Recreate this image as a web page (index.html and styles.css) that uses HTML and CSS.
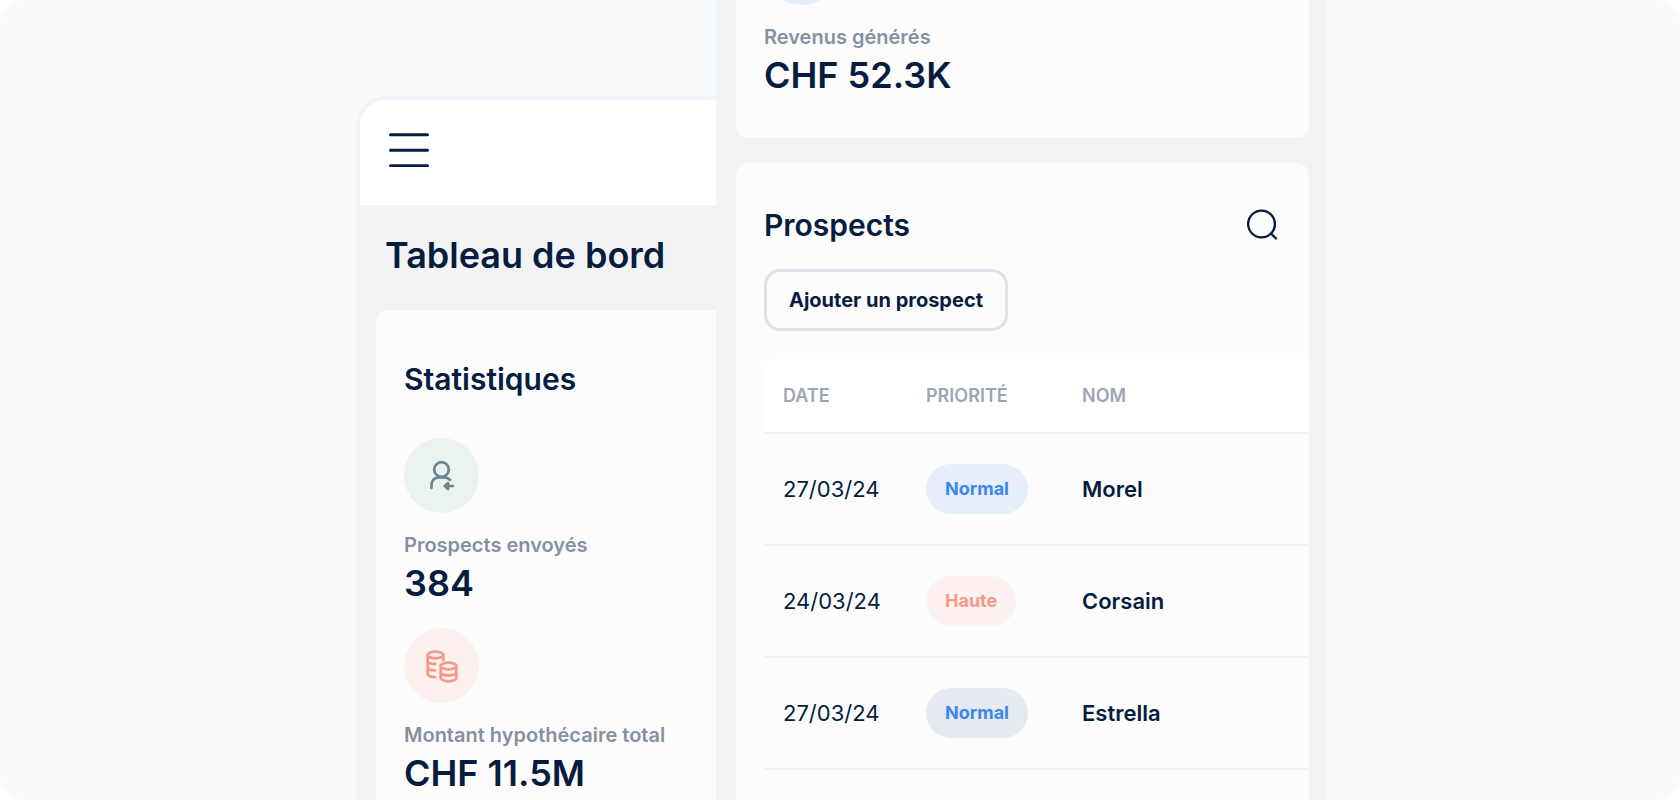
FILE: index.html
```html
<!DOCTYPE html>
<html lang="fr">
<head>
    <meta charset="UTF-8">
    <meta name="viewport" content="width=device-width, initial-scale=1.0">
    <title>Tableau de bord</title>
    <link rel="stylesheet" href="styles.css">
</head>
<body>

    <div class="stage">

        <!-- Écran gauche : statistiques -->
        <section class="screen screen-left">
            <header class="topbar">
                <button class="icon-button" type="button" aria-label="Menu">
                    <svg width="40" height="34" viewBox="0 0 40 34" fill="none" stroke="currentColor" stroke-width="3" stroke-linecap="round">
                        <path d="M1.5 1.8h37M1.5 17.3h37M1.5 32.8h37"/>
                    </svg>
                </button>
            </header>
            <h1 class="page-title">Tableau de bord</h1>

            <div class="card card-stats">
                <h2 class="card-title">Statistiques</h2>
                <div class="stat">
                    <span class="stat-icon green">
                        <svg width="32" height="32" viewBox="0 0 32 32" fill="none" stroke="currentColor" stroke-width="2.7" stroke-linecap="round" stroke-linejoin="round">
                            <circle cx="15.5" cy="9.5" r="7.3"/>
                            <path d="M5.5 28v-2.5c0-5 3-8.2 7.500-8.200h5c2.500 0 4.300.7 6 2.400"/>
                            <path d="M27 26h-8M22 23l-3.200 3 3.200 3z"/>
                        </svg>
                    </span>
                    <p class="stat-label">Prospects envoyés</p>
                    <p class="stat-value">384</p>
                </div>
                <div class="stat">
                    <span class="stat-icon red">
                        <svg width="34" height="34" viewBox="0 0 34 34" fill="none" stroke="currentColor" stroke-width="2.8" stroke-linecap="round">
                            <ellipse cx="10.5" cy="6" rx="7.800" ry="3.300"/>
                            <path d="M2.700 6v19c0 1.700 3 3 7.500 3.200M18.300 6v5M2.700 12.300c0 1.500 3 2.700 7.500 2.700M2.700 18.700c0 1.500 3 2.700 7.500 2.700"/>
                            <ellipse cx="23.500" cy="17" rx="7.800" ry="3.300"/>
                            <path d="M15.700 17v12c0 1.800 3.300 3.300 7.800 3.300s7.800-1.500 7.800-3.300V17M15.700 23.300c0 1.800 3.300 3.200 7.800 3.200s7.800-1.400 7.800-3.200"/>
                        </svg>
                    </span>
                    <p class="stat-label">Montant hypothécaire total</p>
                    <p class="stat-value">CHF 11.5M</p>
                </div>
            </div>
        </section>

        <!-- Écran droit : revenus et prospects -->
        <section class="screen screen-right">
            <div class="card card-revenue">
                <div class="stat">
                    <span class="stat-icon blue"></span>
                    <p class="stat-label">Revenus générés</p>
                    <p class="stat-value">CHF 52.3K</p>
                </div>
            </div>

            <div class="card card-prospects">
                <div class="card-head">
                    <h2 class="card-title">Prospects</h2>
                    <button class="icon-button" type="button" aria-label="Rechercher">
                        <svg width="34" height="34" viewBox="0 0 34 34" fill="none" stroke="currentColor" stroke-width="2.4" stroke-linecap="round">
                            <circle cx="14.5" cy="16" r="13.400"/>
                            <path d="M24 25.500l5 5"/>
                        </svg>
                    </button>
                </div>
                <button class="add-button" type="button">Ajouter un prospect</button>

                <table class="prospects">
                    <thead>
                        <tr>
                            <th class="col-date">Date</th>
                            <th class="col-priority">Priorité</th>
                            <th>Nom</th>
                        </tr>
                    </thead>
                    <tbody>
                        <tr>
                            <td>27/03/24</td>
                            <td><span class="badge normal">Normal</span></td>
                            <td class="name">Morel</td>
                        </tr>
                        <tr>
                            <td>24/03/24</td>
                            <td><span class="badge high">Haute</span></td>
                            <td class="name">Corsain</td>
                        </tr>
                        <tr>
                            <td>27/03/24</td>
                            <td><span class="badge normal muted">Normal</span></td>
                            <td class="name">Estrella</td>
                        </tr>
                    </tbody>
                </table>
            </div>
        </section>

    </div>

</body>
</html>
```
FILE: styles.css
```css
* {
    box-sizing: border-box;
}

body {
    margin: 0;
    background: #ffffff;
    color: #061d3f;
    font-family: Inter, "Liberation Sans", sans-serif;
}

h1, h2, p {
    margin: 0;
}

.stage {
    display: flex;
    justify-content: center;
    align-items: stretch;
    height: 100vh;
    padding-left: 3px;
    overflow: hidden;
    background: #f8fafc;
    border-radius: 24px;
}

/* Écrans */
.screen {
    background: #f3f3f3;
    border: 4px solid #f1f4f9;
}

.screen-left {
    width: 360px;
    margin-top: 96px;
    border-right: none;
    border-bottom: none;
    border-top-left-radius: 30px;
    overflow: hidden;
}

.screen-right {
    width: 611px;
    margin-top: -98px;
    padding: 0 14px 0 16px;
    border-width: 0 4px;
}

.topbar {
    height: 105px;
    padding: 33px 29px;
    background: #ffffff;
}

.icon-button {
    display: block;
    padding: 0;
    border: none;
    background: none;
    color: inherit;
    cursor: pointer;
}

.icon-button svg {
    display: block;
}

.page-title {
    padding: 27px 25px 32px;
    font-size: 36px;
    line-height: 46px;
    font-weight: 600;
}

/* Cartes */
.card {
    background: #fcfcfc;
    border-radius: 12px;
    padding: 28px;
}

.card-stats {
    margin-left: 16px;
    padding-top: 49px;
    padding-right: 0;
    border-top-right-radius: 0;
}

.card-revenue {
    margin-bottom: 25px;
    padding-bottom: 40px;
}

.card-prospects {
    padding: 42px 0 60px 28px;
}

.card-head {
    display: flex;
    justify-content: space-between;
    align-items: center;
    margin-bottom: 24px;
    padding-right: 28px;
}

.card-title {
    font-size: 30px;
    line-height: 40px;
    font-weight: 600;
}

.card-stats .card-title {
    margin-bottom: 39px;
}

/* Statistiques */
.stat + .stat {
    margin-top: 22px;
}

.stat-icon {
    display: flex;
    align-items: center;
    justify-content: center;
    width: 75px;
    height: 75px;
    margin-bottom: 20px;
    border-radius: 50%;
}

.stat-icon.green {
    background: #eaf3f0;
    color: #6b8591;
}

.stat-icon.red {
    background: #fdf1f0;
    color: #f59a88;
}

.stat-icon.blue {
    background: #e5eefb;
}

.stat-label {
    margin-bottom: 3px;
    font-size: 20px;
    line-height: 24px;
    font-weight: 600;
    color: #8491a3;
}

.stat-value {
    font-size: 36px;
    line-height: 46px;
    font-weight: 600;
}

.add-button {
    display: block;
    height: 62px;
    margin-bottom: 28px;
    padding: 0 22px;
    border: 3px solid #dfe2e7;
    border-radius: 16px;
    background: none;
    color: inherit;
    font-family: inherit;
    font-size: 20px;
    font-weight: 700;
    cursor: pointer;
}

/* Tableau des prospects */
.prospects {
    width: 100%;
    table-layout: fixed;
    border-collapse: separate;
    border-spacing: 0;
}

.prospects th,
.prospects td {
    padding: 0 0 0 19px;
    border-bottom: 2px solid #f1f1f2;
    text-align: left;
    vertical-align: middle;
}

.prospects th {
    height: 75px;
    background: #ffffff;
    color: #9ca6b3;
    font-size: 18px;
    font-weight: 600;
    text-transform: uppercase;
}

.prospects th:first-child {
    border-top-left-radius: 12px;
}

.prospects td {
    height: 112px;
    font-size: 22px;
}

.prospects .name {
    font-weight: 600;
}

.col-date {
    width: 143px;
}

.col-priority {
    width: 156px;
}

.badge {
    display: inline-block;
    padding: 0 19px;
    border-radius: 25px;
    font-size: 18px;
    line-height: 50px;
    font-weight: 700;
    vertical-align: middle;
}

.badge.normal {
    background: #e6eefa;
    color: #3b87f2;
}

.badge.high {
    background: #fdf2f1;
    color: #f59a88;
}

.badge.muted {
    background: #e5eaf0;
}
```
